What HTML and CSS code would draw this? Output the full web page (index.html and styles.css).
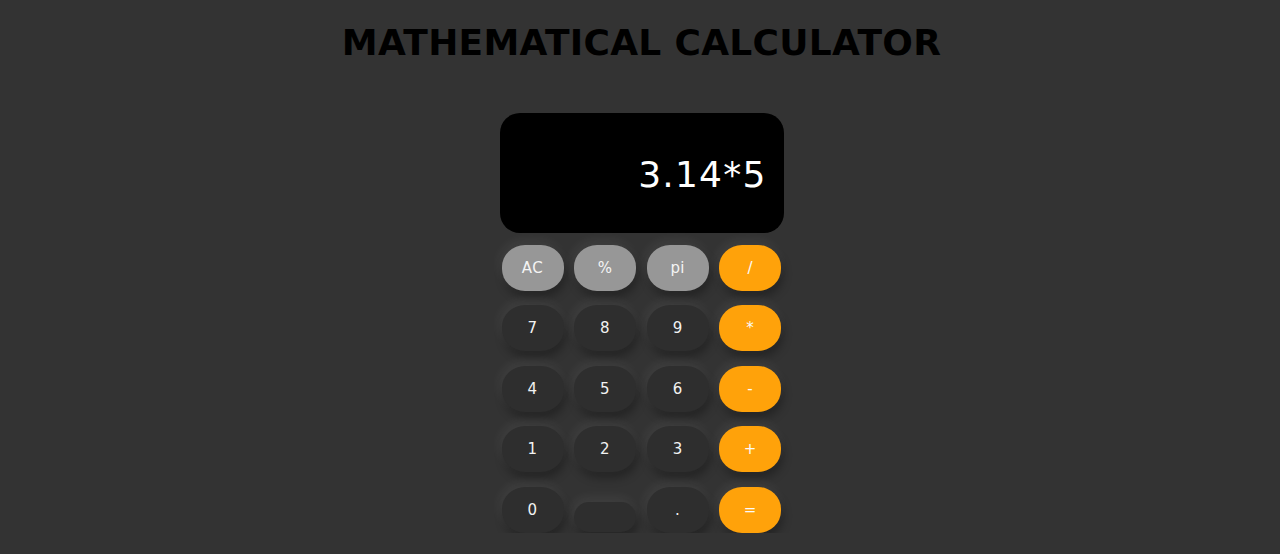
FILE: index.html
```html
<!DOCTYPE html>
<html lang="en">
<head>
<meta charset="utf-8">
<title>Mathematical Calculator</title>
<link rel="stylesheet" href="styles.css">
</head>
<body>
<h1 class="title">MATHEMATICAL CALCULATOR</h1>
<div class="calculator">
  <div class="display">3.14*5</div>
  <div class="keys">
    <button class="key light">AC</button>
    <button class="key light">%</button>
    <button class="key light">pi</button>
    <button class="key op">/</button>
    <button class="key">7</button>
    <button class="key">8</button>
    <button class="key">9</button>
    <button class="key op">*</button>
    <button class="key">4</button>
    <button class="key">5</button>
    <button class="key">6</button>
    <button class="key op">-</button>
    <button class="key">1</button>
    <button class="key">2</button>
    <button class="key">3</button>
    <button class="key op">+</button>
    <button class="key">0</button>
    <button class="key empty"></button>
    <button class="key">.</button>
    <button class="key op">=</button>
  </div>
</div>
</body>
</html>
```
FILE: styles.css
```css
html, body {
  margin: 0;
  padding: 0;
  background: #333333;
  font-family: "DejaVu Sans", Verdana, sans-serif;
}
body {
  display: flex;
  flex-direction: column;
  align-items: center;
}
.title {
  margin: 22px 0 0 0;
  font-size: 36px;
  font-weight: bold;
  color: #000;
  line-height: 42px;
  letter-spacing: 0.3px;
  padding-left: 3px;
}
.calculator {
  margin-top: 49px;
  width: 284px;
  padding-left: 3px;
}
.display {
  height: 120px;
  background: #000;
  border-radius: 20px;
  color: #fff;
  font-size: 36px;
  letter-spacing: 1.2px;
  display: flex;
  align-items: center;
  justify-content: flex-end;
  padding: 2px 17px 0 0;
  box-sizing: border-box;
}
.keys {
  margin-top: 12px;
  padding: 0 2px;
  display: grid;
  grid-template-columns: repeat(4, 62px);
  column-gap: 10.6px;
  row-gap: 14.4px;
}
.key {
  height: 46px;
  border: none;
  border-radius: 23px / 22px;
  background: #2e2e2e;
  color: #f2f2f2;
  font-family: "DejaVu Sans", Verdana, sans-serif;
  font-size: 15px;
  letter-spacing: 0.4px;
  padding: 0;
  box-shadow: -2px -4px 12px rgba(255, 255, 255, 0.07), 2px 6px 10px rgba(0, 0, 0, 0.3);
}
.key.light {
  background: #979797;
  color: #f4f4f4;
}
.key.op {
  background: #ffa20a;
  color: #fbfbfb;
}
.key.empty {
  height: 30px;
  align-self: end;
  margin-bottom: 1px;
  border-radius: 15px;
}
```
